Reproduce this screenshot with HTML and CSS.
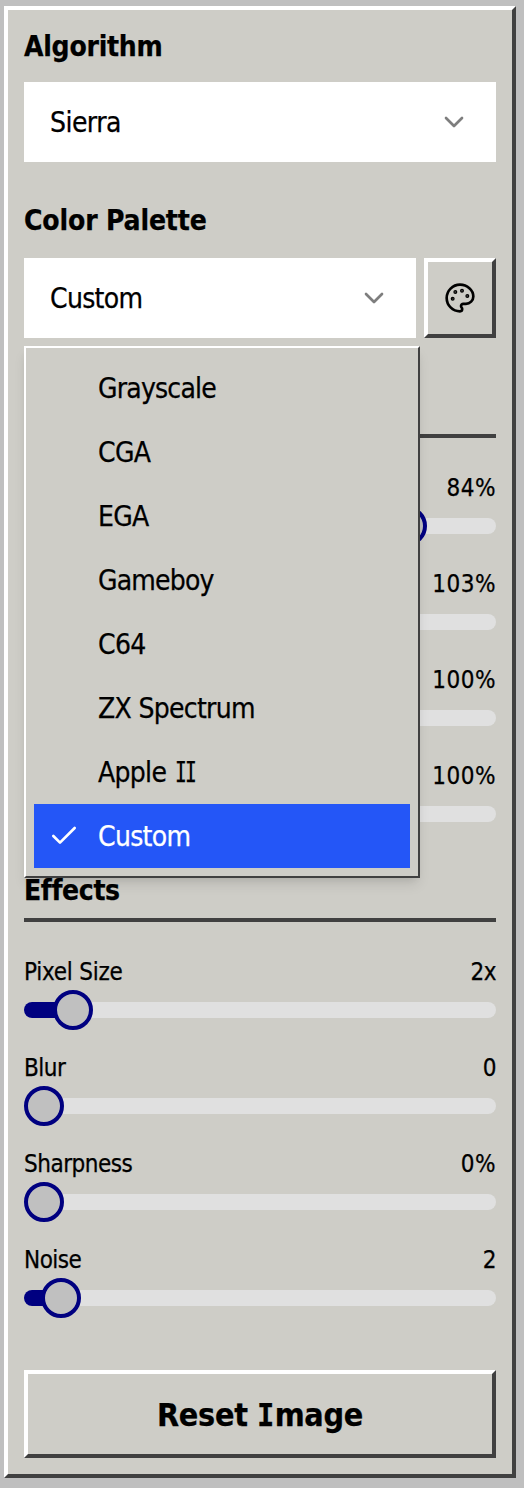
FILE: index.html
```html
<!DOCTYPE html>
<html lang="en">
<head>
<meta charset="utf-8">
<title>Dither settings</title>
<link rel="stylesheet" href="styles.css">
</head>
<body>
<main class="panel">
  <h2 class="label"><span class="t-algorithm">Algorithm</span></h2>
  <div class="select select-algorithm">
    <span class="t-sierra">Sierra</span>
    <svg class="icon chevron" viewBox="0 0 24 24"><path d="m6 9 6 6 6-6"/></svg>
  </div>

  <h2 class="label label-palette"><span class="t-palette">Color Palette</span></h2>
  <div class="palette-row">
    <div class="select">
      <span>Custom</span>
      <svg class="icon chevron" viewBox="0 0 24 24"><path d="m6 9 6 6 6-6"/></svg>
    </div>
    <button class="bevel palette-button" aria-label="Edit palette">
      <svg class="icon" viewBox="0 0 24 24"><g fill="currentColor"><circle cx="13.5" cy="6.5" r=".5"/><circle cx="17.5" cy="10.5" r=".5"/><circle cx="8.5" cy="7.5" r=".5"/><circle cx="6.5" cy="12.5" r=".5"/></g><path d="M12 2C6.5 2 2 6.5 2 12s4.5 10 10 10c.926 0 1.648-.746 1.648-1.688 0-.437-.18-.835-.437-1.125-.29-.289-.438-.652-.438-1.125a1.64 1.64 0 0 1 1.668-1.668h1.996c3.051 0 5.555-2.503 5.555-5.554C21.965 6.012 17.461 2 12 2z"/></svg>
    </button>
    <ul class="menu">
      <li><span class="t-grayscale">Grayscale</span></li>
      <li><span>CGA</span></li>
      <li><span>EGA</span></li>
      <li><span class="t-grayscale">Gameboy</span></li>
      <li><span>C64</span></li>
      <li><span>ZX Spectrum</span></li>
      <li><span>Apple <span class="slab">II</span></span></li>
      <li class="selected"><svg class="icon check" viewBox="0 0 24 24"><path d="M20 6 9 17l-5-5"/></svg><span>Custom</span></li>
    </ul>
  </div>

  <section class="adjustments">
    <div class="section-title"></div>
    <div class="sliders">
      <div class="slider"><div class="caption"><span></span><span class="percent">84%</span></div><div class="track"><i class="fill" style="width:383px"></i><i class="thumb" style="left:363px"></i></div></div>
      <div class="slider"><div class="caption"><span></span><span class="percent">103%</span></div><div class="track"><i class="fill" style="width:242px"></i><i class="thumb" style="left:222px"></i></div></div>
      <div class="slider"><div class="caption"><span></span><span class="percent">100%</span></div><div class="track"><i class="fill" style="width:236px"></i><i class="thumb" style="left:216px"></i></div></div>
      <div class="slider"><div class="caption"><span></span><span class="percent">100%</span></div><div class="track"><i class="fill" style="width:236px"></i><i class="thumb" style="left:216px"></i></div></div>
    </div>
  </section>

  <section class="effects">
    <h2 class="section-title"><span class="t-effects">Effects</span></h2>
    <div class="sliders">
      <div class="slider"><div class="caption"><span class="t-pixel">Pixel Size</span><span>2x</span></div><div class="track"><i class="fill" style="width:49px"></i><i class="thumb" style="left:29px"></i></div></div>
      <div class="slider"><div class="caption"><span>Blur</span><span>0</span></div><div class="track"><i class="thumb" style="left:0"></i></div></div>
      <div class="slider"><div class="caption"><span>Sharpness</span><span class="percent">0%</span></div><div class="track"><i class="thumb" style="left:0"></i></div></div>
      <div class="slider"><div class="caption"><span>Noise</span><span>2</span></div><div class="track"><i class="fill" style="width:37px"></i><i class="thumb" style="left:17px"></i></div></div>
    </div>
  </section>

  <button class="bevel reset"><span>Reset <span class="slab">I</span>mage</span></button>
</main>
</body>
</html>
```

FILE: styles.css
```css
* { box-sizing: border-box; }
body {
  margin: 0;
  padding: 6px 8px 10px 4px;
  background: #bfbfbf;
  color: #000;
  font: 28px/40px Tahoma, "DejaVu Sans Condensed", "DejaVu Sans", sans-serif;
  font-stretch: condensed;
  letter-spacing: -0.7px;
  -webkit-text-stroke: .25px currentColor;
}
h2 { margin: 0; font-size: 28px; line-height: 42px; font-weight: 700; height: 40px; }
span { white-space: nowrap; }
.t-algorithm { letter-spacing: -.25px; }
.t-palette { letter-spacing: -.15px; }
.t-effects { letter-spacing: -.35px; }
.t-sierra { letter-spacing: -.55px; }
.t-grayscale { letter-spacing: -.8px; }
.t-pixel { letter-spacing: -.25px; }
.panel, .bevel {
  border: 4px solid;
  border-color: #fff #404040 #404040 #fff;
  background: #cecdc7;
}
.panel { display: flex; flex-direction: column; height: 1472px; padding: 16px; }
.icon {
  width: 32px; height: 32px; flex: none;
  fill: none; stroke: currentColor; stroke-width: 2;
  stroke-linecap: round; stroke-linejoin: round;
}
.chevron { opacity: .5; }
.select {
  display: flex; flex: 1; align-items: center; justify-content: space-between;
  height: 80px; padding: 0 26px; background: #fff;
}
.select > span, .menu li > span, .reset > span { padding-top: 2px; }
.select-algorithm { flex: none; margin-top: 16px; }
.label-palette { margin-top: 38px; }
.palette-row { position: relative; display: flex; gap: 8px; margin-top: 18px; }
.bevel { display: flex; align-items: center; justify-content: center; padding: 0; color: #000; font: inherit; letter-spacing: inherit; }
.palette-button { width: 72px; height: 80px; }
.menu {
  position: absolute; z-index: 2; top: 88px; left: 0; width: 396px;
  margin: 0; padding: 8px; list-style: none;
  border: 2px solid; border-color: #fff #404040 #404040 #fff;
  background: #cecdc7;
  box-shadow: 0 8px 12px -2px rgba(0,0,0,.1), 0 4px 8px -4px rgba(0,0,0,.1);
}
.menu li { display: flex; align-items: center; position: relative; height: 64px; padding-left: 64px; }
.menu .selected { background: #2456f7; color: #fff; }
.check { position: absolute; left: 14px; top: 16px; }
.adjustments { margin-top: 48px; }
.effects { margin-top: 36px; }
.section-title { height: 52px; border-bottom: 4px solid #404040; }
.sliders { display: flex; flex-direction: column; gap: 22px; margin-top: 34px; }
.slider { display: flex; flex-direction: column; gap: 2px; height: 74px; }
.caption { display: flex; justify-content: space-between; height: 32px; font-size: 24px; line-height: 32px; letter-spacing: -.5px; }
.percent { letter-spacing: .5px; }
.track { position: relative; height: 16px; margin: 12px 0; border-radius: 8px; background: #e0e0e0; }
.fill { display: block; height: 16px; border-radius: 8px 0 0 8px; background: #000080; }
.thumb { position: absolute; top: -12px; width: 40px; height: 40px; border: 4px solid #000080; border-radius: 50%; background: #c0c0c0; }
.reset { height: 88px; margin-top: auto; font-size: 32px; font-weight: 700; letter-spacing: -.3px; }
/* Serifed capital I, narrowed to sit with the condensed face */
.slab { display: inline-block; margin-left: 1px; font-family: "DejaVu Sans Mono", monospace; line-height: 1; letter-spacing: -2.6px; transform: scaleX(.7); transform-origin: left; }
.reset .slab { margin: 0 -2px 0 0; letter-spacing: 0; transform: scaleX(.9); }
```
